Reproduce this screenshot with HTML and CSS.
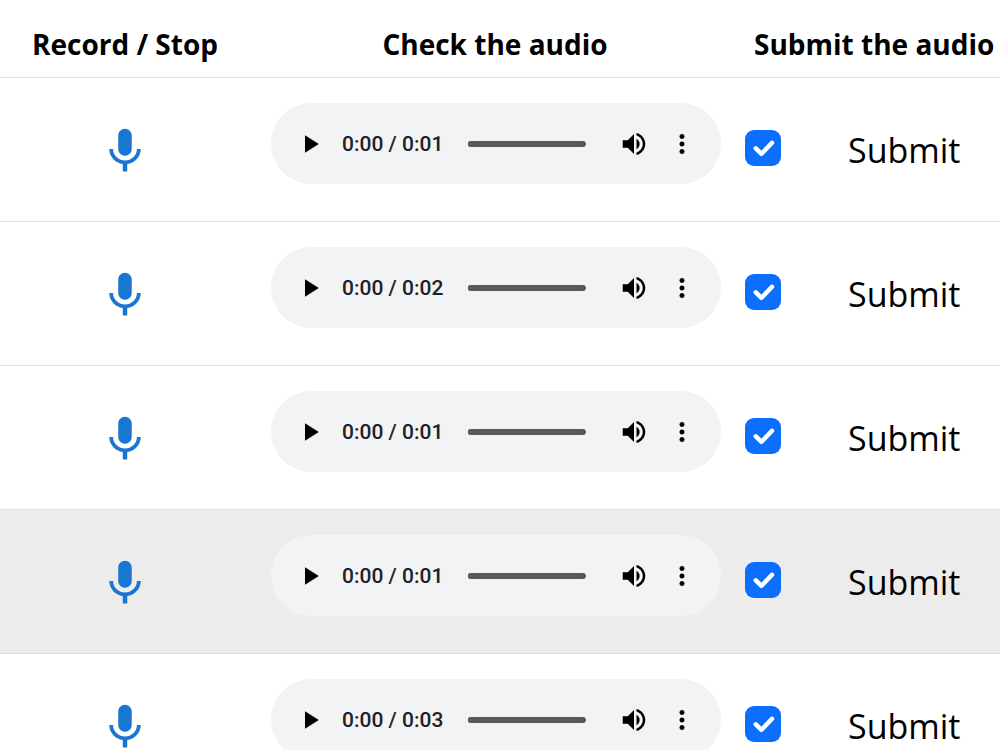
FILE: index.html
```html
<!DOCTYPE html>
<html lang="en">
<head>
	<meta charset="utf-8">
	<title>Record audio</title>
	<meta name="viewport" content="width=device-width">
	<link rel="stylesheet" href="styles.css">
</head>
<body>
	<svg class="sprite" aria-hidden="true">
		<symbol id="mic" viewBox="0 0 24 24"><path d="M12 15c1.66 0 2.99-1.34 2.99-3L15 6c0-1.66-1.34-3-3-3S9 4.34 9 6v6c0 1.66 1.34 3 3 3zm5.3-3c0 3-2.54 5.1-5.3 5.1S6.7 15 6.7 12H5c0 3.42 2.72 6.23 6 6.72V22h2v-3.28c3.28-.48 6-3.3 6-6.72h-1.7z"/></symbol>
		<symbol id="play" viewBox="0 0 24 24"><path d="M8 5v14l11-7z"/></symbol>
		<symbol id="volume" viewBox="0 0 24 24"><path d="M3 9v6h4l5 5V4L7 9H3zm13.5 3c0-1.77-1.02-3.29-2.5-4.03v8.05c1.48-.73 2.5-2.25 2.5-4.02zM14 3.23v2.06c2.89.86 5 3.54 5 6.71s-2.11 5.85-5 6.71v2.06c4.01-.91 7-4.49 7-8.77s-2.99-7.86-7-8.77z"/></symbol>
		<symbol id="more" viewBox="0 0 24 24"><path d="M12 8c1.1 0 2-.9 2-2s-.9-2-2-2-2 .9-2 2 .9 2 2 2zm0 2c-1.1 0-2 .9-2 2s.9 2 2 2 2-.9 2-2-.9-2-2-2zm0 6c-1.1 0-2 .9-2 2s.9 2 2 2 2-.9 2-2-.9-2-2-2z"/></symbol>
	</svg>

	<table class="records">
		<thead>
			<tr>
				<th class="col-record">Record / Stop</th>
				<th class="col-check">Check the audio</th>
				<th class="col-submit">Submit the audio</th>
			</tr>
		</thead>
		<tbody id="rows"></tbody>
	</table>

	<template id="row">
		<tr>
			<td><button class="mic" type="button" aria-label="Record"><svg><use href="#mic"/></svg></button></td>
			<td class="check">
				<div class="player">
					<button type="button" aria-label="Play"><svg><use href="#play"/></svg></button>
					<span class="time"></span>
					<input class="seek" type="range" min="0" max="100" value="0" aria-label="Position">
					<button type="button" aria-label="Volume"><svg><use href="#volume"/></svg></button>
					<button type="button" aria-label="More"><svg><use href="#more"/></svg></button>
				</div>
			</td>
			<td>
				<div class="submit">
					<input class="done" type="checkbox" aria-label="Audio is ready" checked>
					<button class="send" type="button">Submit</button>
				</div>
			</td>
		</tr>
	</template>

<script src="script.js"></script>
</body>
</html>
```

FILE: styles.css
```css
body {
	margin: 0;
	background: white;
	color: black;
	font-family: "Segoe UI", "Open Sans", "Noto Sans", sans-serif;
	overflow-x: hidden;
}
button {
	padding: 0;
	border: none;
	background: none;
	color: inherit;
	font: inherit;
	cursor: pointer;
}
svg {
	display: block;
	fill: currentColor;
}
.sprite {
	display: none;
}

.records {
	width: 100%;
	table-layout: fixed;
	border-spacing: 0;
}
.records th,
.records td {
	padding: 0;
	border-bottom: 1px solid #dee2e6;
}
.records th {
	height: 78px;
	padding-top: 10px;
	box-sizing: border-box;
	font-size: 28px;
	line-height: 40px;
	font-weight: bold;
	white-space: nowrap;
}
.records td {
	height: 143px;
}
.records tr.active td {
	background: #ececec;
}
.col-record {
	width: 25%;
}
.col-check {
	width: 49%;
}
.records .col-submit {
	padding-left: 14px;
	text-align: left;
}

.mic {
	display: block;
	margin: 0 auto 2px;
	color: #1976d2;
}
.mic svg {
	width: 54px;
	height: 54px;
}

.records .check {
	padding-left: 2px;
}
.player {
	display: flex;
	align-items: center;
	box-sizing: border-box;
	max-width: 450px;
	height: 81px;
	margin: 0 auto 12px;
	padding: 0 15px;
	border-radius: 41px;
	background: #f1f3f4;
}
.player button {
	flex: none;
	width: 48px;
	height: 48px;
}
.player svg {
	width: 30px;
	height: 30px;
	margin: auto;
}
.time {
	flex: none;
	width: 102px;
	margin-left: 8px;
	color: #202124;
	font-family: Roboto, sans-serif;
	font-size: 21px;
	font-weight: 500;
	white-space: nowrap;
}
.seek {
	flex: 1;
	min-width: 0;
	height: 6px;
	margin: 0 24px;
	border-radius: 3px;
	background: #5a5a5a;
	appearance: none;
	cursor: pointer;
}
.seek::-webkit-slider-thumb {
	width: 6px;
	height: 6px;
	border-radius: 3px;
	background: #5a5a5a;
	appearance: none;
}

.submit {
	display: flex;
	align-items: center;
	gap: 67px;
	padding-left: 5px;
}
.done {
	flex: none;
	width: 36px;
	height: 36px;
	margin: 0 0 4px;
	border-radius: 9px;
	background: white;
	box-shadow: inset 0 0 0 1px #0d6efd;
	appearance: none;
	cursor: pointer;
}
.done:checked {
	background: #0d6efd url("data:image/svg+xml,%3Csvg xmlns='http://www.w3.org/2000/svg' viewBox='0 0 36 36'%3E%3Cpath d='M10.8 18.3l5.7 5.5L27 12.8' fill='none' stroke='white' stroke-width='4.5' stroke-linecap='round' stroke-linejoin='round'/%3E%3C/svg%3E") center / 36px 36px;
}
.send {
	font-size: 34px;
	line-height: 54px;
}
```

FILE: script.js
```js
const records = [
	{ length: "0:01" },
	{ length: "0:02" },
	{ length: "0:01" },
	{ length: "0:01", active: true },
	{ length: "0:03" }
]

const template = document.getElementById("row")
records.forEach(record => {
	const row = template.content.cloneNode(true)
	row.querySelector(".time").textContent = `0:00 / ${record.length}`
	if (record.active) {
		row.querySelector("tr").classList.add("active")
	}
	document.getElementById("rows").append(row)
})
```
